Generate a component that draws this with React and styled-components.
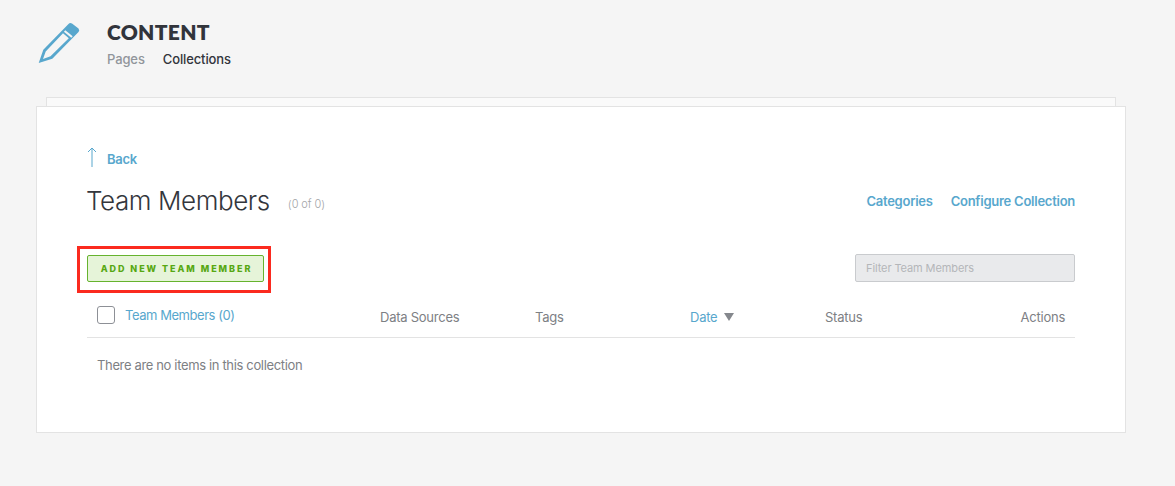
import React from 'react'
import styled, { createGlobalStyle } from 'styled-components'

const BLUE = '#58a7cd'
const GREY = '#7d8084'

const Global = createGlobalStyle`
  html, body {
    margin: 0;
    padding: 0;
    background: #f5f5f5;
    font-family: "Open Sans", "Liberation Sans", sans-serif;
  }
  * { box-sizing: border-box; }
`

const Page = styled.div`
  width: 1175px;
  height: 486px;
  overflow: hidden;
  padding: 0 49px 0 36px;
`

const Header = styled.header`
  display: flex;
  height: 97px;
  padding: 22px 0 0 2px;
`

const IconWrap = styled.div`
  width: 69px;
  flex: none;
  svg { display: block; }
`

const HeaderText = styled.div`
  display: flex;
  flex-direction: column;
`

const Title = styled.h1`
  margin: -1px 0 0;
  font: 800 21px/21px Lato, sans-serif;
  color: #31343b;
  letter-spacing: 0.3px;
`

const Tabs = styled.nav`
  display: flex;
  gap: 18px;
  margin-top: 8px;
`

const Tab = styled.a`
  font: 500 13px/18px Inter, sans-serif;
  letter-spacing: -0.12px;
  color: ${p => (p.$active ? '#31343b' : '#91959b')};
`

const BackSheet = styled.div`
  height: 10px;
  margin: 0 10px;
  background: #fafafa;
  border: 1px solid #e3e3e3;
  border-bottom: none;
`

const Card = styled.main`
  height: 327px;
  margin-top: -1px;
  position: relative;
  background: #fff;
  border: 1px solid #e3e3e3;
  padding: 41px 50px 0;
`

const BackRow = styled.a`
  display: flex;
  align-items: center;
  gap: 10px;
  height: 22px;
  font: 600 13px/22px Inter, sans-serif;
  letter-spacing: -0.3px;
  color: ${BLUE};
  svg { display: block; margin-top: -4px; }
`

const TitleRow = styled.div`
  display: flex;
  align-items: center;
  margin-top: 13px;
  height: 36px;
`

const Heading = styled.h2`
  margin: 0 0 0 -1px;
  font: 300 26px/36px Inter, sans-serif;
  color: #33363c;
  letter-spacing: -0.42px;
`

const Count = styled.span`
  margin: 6px 0 0 18px;
  font: 300 11px/16px Inter, sans-serif;
  color: #a3a5a8;
  word-spacing: -0.5px;
  letter-spacing: 0.1px;
`

const TopLinks = styled.div`
  display: flex;
  gap: 18px;
  margin-left: auto;
`

const TopLink = styled.a`
  font: 600 13px/18px Inter, sans-serif;
  color: ${BLUE};
  letter-spacing: -0.25px;
`

const ToolRow = styled.div`
  display: flex;
  justify-content: space-between;
  align-items: center;
  margin-top: 35px;
  height: 28px;
`

const ButtonWrap = styled.div`
  position: relative;
`

const AddButton = styled.button`
  display: block;
  width: 177px;
  height: 27px;
  padding: 0 0 0 2px;
  background: #e6f4d9;
  border: 1px solid #66b32e;
  border-radius: 2px;
  font: 800 9px/25px Inter, sans-serif;
  letter-spacing: 1.95px;
  color: #57a813;
  text-align: center;
`

const Highlight = styled.span`
  position: absolute;
  left: -10px;
  top: -9px;
  width: 194px;
  height: 47px;
  border: 3px solid #fb2a1f;
  pointer-events: none;
`

const FilterInput = styled.input`
  width: 220px;
  height: 28px;
  padding: 0 10px;
  background: #e9eaec;
  border: 1px solid #c9cbce;
  border-radius: 2px;
  font: 400 11px Inter, sans-serif;
  letter-spacing: -0.1px;
  color: #333;
  &::placeholder { color: #b4b6b9; opacity: 1; }
`

const TableHead = styled.div`
  display: grid;
  grid-template-columns: 293px 155px 155px 135px 1fr;
  align-items: center;
  height: 42px;
  margin-top: 14px;
  padding-right: 10px;
  border-bottom: 1px solid #e3e3e3;
`

const FirstCol = styled.div`
  display: flex;
  align-items: center;
  gap: 10px;
  padding-left: 10px;
  margin-top: -3px;
`

const Checkbox = styled.span`
  width: 18px;
  height: 18px;
  flex: none;
  background: #fff;
  border: 1px solid #8d9096;
  border-radius: 3px;
`

const ColLabel = styled.span`
  display: flex;
  align-items: center;
  gap: 7px;
  font: 400 13px/18px Inter, sans-serif;
  color: ${p => (p.$link ? BLUE : GREY)};
  letter-spacing: ${p => (p.$tight ? '-0.45px' : '-0.25px')};
`

const SortArrow = styled.i`
  width: 0;
  height: 0;
  border-left: 5px solid transparent;
  border-right: 5px solid transparent;
  border-top: 8px solid #85888d;
`

const StatusCell = styled(ColLabel)`
  justify-content: space-between;
`

const EmptyText = styled.p`
  margin: 17px 0 0 10px;
  font: 400 13px/20px Inter, sans-serif;
  color: ${GREY};
  letter-spacing: -0.35px;
`

const PencilIcon = () => (
  <svg width="42" height="42" viewBox="4 4 42 42" fill="none">
    <path
      d="M4.7 45 L9.3 31.7 L34.5 6 Q36 4 38 5.6 L44.5 10.5 Q46 12.5 44.5 14 L18.3 40.7 Z M11.7 33.5 L9 41 L16.5 38.3 L34.8 20.2 L29 15.2 Z"
      fill="#58a7cd"
      fillRule="evenodd"
    />
    <path d="M30.6 13 L38 19" stroke="#f5f5f5" strokeWidth="2.2" />
  </svg>
)

const BackArrow = () => (
  <svg width="10" height="20" viewBox="0 0 10 20" fill="none" stroke="#58a7cd" strokeWidth="1">
    <path d="M5 1 V20 M1 5 L5 1 L9 5" />
  </svg>
)

export default function App() {
  return (
    <Page>
      <Global />
      <Header>
        <IconWrap><PencilIcon /></IconWrap>
        <HeaderText>
          <Title>CONTENT</Title>
          <Tabs>
            <Tab>Pages</Tab>
            <Tab $active>Collections</Tab>
          </Tabs>
        </HeaderText>
      </Header>
      <BackSheet />
      <Card>
        <BackRow><BackArrow />Back</BackRow>
        <TitleRow>
          <Heading>Team Members</Heading>
          <Count>(0 of 0)</Count>
          <TopLinks>
            <TopLink>Categories</TopLink>
            <TopLink>Configure Collection</TopLink>
          </TopLinks>
        </TitleRow>
        <ToolRow>
          <ButtonWrap>
            <AddButton>ADD NEW TEAM MEMBER</AddButton>
            <Highlight />
          </ButtonWrap>
          <FilterInput placeholder="Filter Team Members" />
        </ToolRow>
        <TableHead>
          <FirstCol>
            <Checkbox />
            <ColLabel $link $tight>Team Members (0)</ColLabel>
          </FirstCol>
          <ColLabel>Data Sources</ColLabel>
          <ColLabel>Tags</ColLabel>
          <ColLabel $link>Date <SortArrow /></ColLabel>
          <StatusCell>
            <span>Status</span><span>Actions</span>
          </StatusCell>
        </TableHead>
        <EmptyText>There are no items in this collection</EmptyText>
      </Card>
    </Page>
  )
}
